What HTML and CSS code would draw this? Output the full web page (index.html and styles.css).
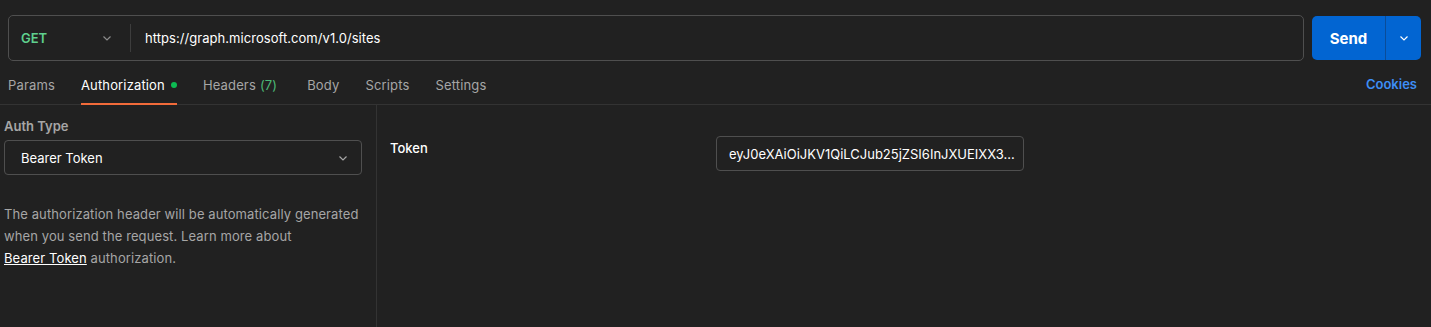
FILE: index.html
```html
<!DOCTYPE html>
<html>
<head>
    <title>Request - Authorization</title>
    <link rel="stylesheet" href="styles.css">
</head>
<body>
    <div class="request-bar">
        <div class="url-box">
            <div class="method">
                <span class="method-name">GET</span>
                <svg class="chevron" width="12" height="12" viewBox="0 0 12 12"><path d="M2.5 4.5 L6 8 L9.5 4.5" fill="none" stroke="#8c8c8c" stroke-width="1.2"/></svg>
            </div>
            <div class="url-text">https://graph.microsoft.com/v1.0/sites</div>
        </div>
        <div class="send">
            <button class="send-main">Send</button>
            <button class="send-more">
                <svg width="12" height="12" viewBox="0 0 12 12"><path d="M2.5 4.5 L6 8 L9.5 4.5" fill="none" stroke="#ffffff" stroke-width="1.2"/></svg>
            </button>
        </div>
    </div>

    <div class="tabs">
        <div class="tab">Params</div>
        <div class="tab active">Authorization <span class="dot"></span></div>
        <div class="tab">Headers <span class="count">(7)</span></div>
        <div class="tab">Body</div>
        <div class="tab">Scripts</div>
        <div class="tab">Settings</div>
        <div class="cookies">Cookies</div>
    </div>

    <div class="auth">
        <div class="auth-left">
            <div class="auth-label">Auth Type</div>
            <div class="select">
                <span>Bearer Token</span>
                <svg width="12" height="12" viewBox="0 0 12 12"><path d="M2.5 4.5 L6 8 L9.5 4.5" fill="none" stroke="#a6a6a6" stroke-width="1.2"/></svg>
            </div>
            <p class="help">The authorization header will be automatically generated when you send the request. Learn more about <a href="#">Bearer Token</a> authorization.</p>
        </div>
        <div class="auth-right">
            <div class="field-row">
                <div class="field-label">Token</div>
                <div class="token-input">eyJ0eXAiOiJKV1QiLCJub25jZSI6InJXUEIXX3…</div>
            </div>
        </div>
    </div>
</body>
</html>
```

FILE: styles.css
```css
body {
    margin: 0;
    background-color: #212121;
    color: #ffffff;
    font-family: Inter, "Noto Sans", sans-serif;
    font-size: 13px;
    height: 327px;
    display: flex;
    flex-direction: column;
}

.request-bar {
    display: flex;
    gap: 8px;
    padding: 15px 10px 0 8px;
}

.url-box {
    flex: 1;
    height: 46px;
    box-sizing: border-box;
    border: 1px solid #4f4f4f;
    border-radius: 5px;
    display: flex;
    align-items: center;
}

.method {
    width: 122px;
    box-sizing: border-box;
    padding: 0 17px 0 12px;
    display: flex;
    justify-content: space-between;
    align-items: center;
    border-right: 1px solid #3d3d3d;
    height: 28px;
}

.method-name {
    color: #5fd08e;
    font-weight: 600;
    font-size: 13px;
}

.url-text {
    padding-left: 14px;
    font-size: 13px;
    letter-spacing: 0.05px;
    color: #ffffff;
}

.send {
    display: flex;
    height: 44px;
    margin-top: 1px;
    background-color: #0265d2;
    border-radius: 5px;
}

.send button {
    background: none;
    border: none;
    color: #ffffff;
    font-family: Inter, "Noto Sans", sans-serif;
    cursor: pointer;
    display: flex;
    align-items: center;
    justify-content: center;
}

.send-main {
    width: 74px;
    font-size: 15px;
    font-weight: 700;
    border-right: 1px solid #0a4c99 !important;
}

.send-more {
    width: 35px;
}

.tabs {
    display: flex;
    align-items: stretch;
    gap: 26px;
    padding: 0 14px 0 8px;
    height: 43px;
    border-bottom: 1px solid #333333;
}

.tab {
    display: flex;
    align-items: center;
    padding-top: 5px;
    font-size: 13px;
    letter-spacing: 0.15px;
    color: #a6a6a6;
    border-bottom: 2px solid transparent;
    margin-bottom: -1px;
}

.tab.active {
    color: #ffffff;
    border-bottom-color: #f26b3a;
}

.dot {
    display: inline-block;
    width: 6px;
    height: 6px;
    border-radius: 50%;
    background-color: #0cbb52;
    margin-left: 6px;
}

.count {
    color: #4cb876;
    margin-left: 4px;
    margin-right: 4px;
}

.cookies {
    margin-left: auto;
    display: flex;
    align-items: center;
    padding-top: 3px;
    color: #3d8ef5;
    font-weight: 600;
    font-size: 13px;
}

.auth {
    flex: 1;
    display: flex;
}

.auth-left {
    width: 372px;
    padding-left: 4px;
    border-right: 1px solid #333333;
}

.auth-label {
    margin-top: 13px;
    color: #a6a6a6;
    font-weight: 600;
    font-size: 13px;
}

.select {
    width: 358px;
    height: 35px;
    box-sizing: border-box;
    margin-top: 6px;
    border: 1px solid #4f4f4f;
    border-radius: 4px;
    padding: 0 12px 0 16px;
    display: flex;
    align-items: center;
    justify-content: space-between;
    font-size: 13px;
}

.help {
    width: 358px;
    margin: 28px 0 0 0;
    color: #a6a6a6;
    line-height: 22px;
    font-size: 13px;
    letter-spacing: 0.1px;
}

.help a {
    color: #ffffff;
    white-space: nowrap;
}

.auth-right {
    flex: 1;
    padding: 31px 0 0 13px;
}

.field-row {
    display: flex;
    align-items: center;
}

.field-label {
    width: 326px;
    font-size: 13px;
    font-weight: 500;
    margin-top: -12px;
}

.token-input {
    width: 308px;
    height: 35px;
    box-sizing: border-box;
    border: 1px solid #4f4f4f;
    border-radius: 4px;
    padding: 0 12px;
    display: flex;
    align-items: center;
    font-size: 13px;
    white-space: nowrap;
    overflow: hidden;
}
```
